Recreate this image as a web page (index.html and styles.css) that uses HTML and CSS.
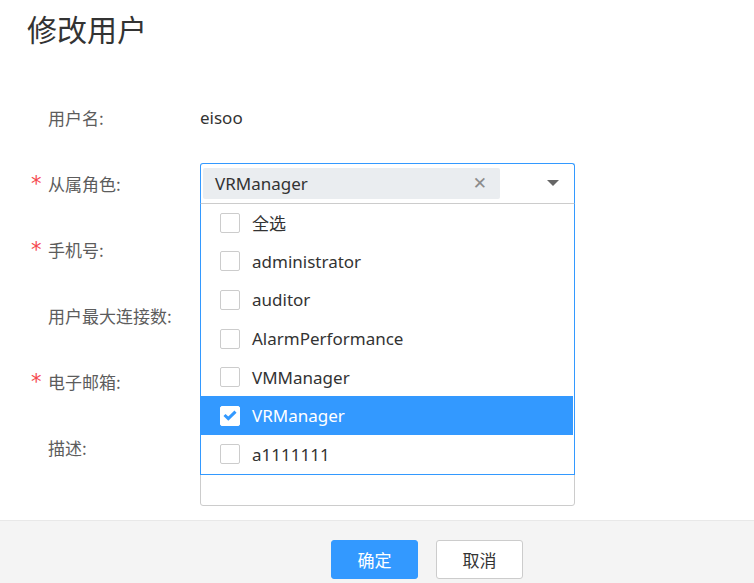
FILE: index.html
```html
<!DOCTYPE html>
<html lang="zh-CN">
<head>
    <meta charset="UTF-8">
    <meta name="viewport" content="width=device-width, initial-scale=1.0">
    <title>修改用户</title>
    <link rel="stylesheet" href="styles.css">
</head>
<body>
    <div class="page">
        <h1 class="title">修改用户</h1>
        <div class="form">
            <div class="row">
                <label class="label">用户名:</label>
                <div class="value">eisoo</div>
            </div>
            <div class="row">
                <label class="label"><span class="star">*</span>从属角色:</label>
                <div class="select-wrap">
                    <div class="select">
                        <span class="tag">VRManager<span class="tag-close">✕</span></span>
                        <span class="caret"></span>
                    </div>
                    <ul class="dropdown">
                        <li><span class="checkbox"></span>全选</li>
                        <li><span class="checkbox"></span>administrator</li>
                        <li><span class="checkbox"></span>auditor</li>
                        <li><span class="checkbox"></span>AlarmPerformance</li>
                        <li><span class="checkbox"></span>VMManager</li>
                        <li class="active"><span class="checkbox checked">
                            <svg width="14" height="11" viewBox="0 0 14 11"><path d="M1.5 5 L5.3 8.6 L12.5 1.6" fill="none" stroke="#3399ff" stroke-width="3"/></svg>
                        </span>VRManager</li>
                        <li><span class="checkbox"></span>a1111111</li>
                    </ul>
                </div>
            </div>
            <div class="row">
                <label class="label"><span class="star">*</span>手机号:</label>
                <input class="input" type="text">
            </div>
            <div class="row">
                <label class="label">用户最大连接数:</label>
                <input class="input" type="text">
            </div>
            <div class="row">
                <label class="label"><span class="star">*</span>电子邮箱:</label>
                <input class="input" type="text">
            </div>
            <div class="row row-top">
                <label class="label">描述:</label>
                <textarea class="textarea"></textarea>
            </div>
        </div>
        <div class="footer">
            <button type="button" class="btn btn-primary">确定</button>
            <button type="button" class="btn">取消</button>
        </div>
    </div>
</body>
</html>
```

FILE: styles.css
```css
body {
    font-family: "Noto Sans", "Noto Sans CJK SC", sans-serif;
    margin: 0;
    padding: 0;
    background-color: white;
    color: #333;
}

.page {
    height: 583px;
    display: flex;
    flex-direction: column;
    overflow: hidden;
}

.title {
    margin: 0;
    padding-left: 27px;
    font-family: "Noto Sans CJK SC", sans-serif;
    font-size: 30px;
    font-weight: normal;
    line-height: 56px;
    color: #333;
}

.form {
    margin-top: 28px;
}

.row {
    display: flex;
    align-items: center;
    height: 66px;
}

.row-top {
    align-items: flex-start;
}

.label {
    position: relative;
    width: 152px;
    padding-left: 48px;
    font-family: "Noto Sans CJK SC", sans-serif;
    font-size: 17px;
    color: #5c5c5c;
}

.row-top .label {
    margin-top: 21px;
}

.star {
    position: absolute;
    left: 31px;
    top: 3px;
    color: #f5484d;
    font-family: "DejaVu Sans", sans-serif;
    font-size: 21px;
    line-height: 21px;
}

.value {
    font-size: 17px;
    color: #333;
}

.input {
    box-sizing: border-box;
    width: 375px;
    height: 38px;
    border: 1px solid #ccc;
    border-radius: 3px;
}

.textarea {
    box-sizing: border-box;
    width: 375px;
    height: 76px;
    margin-top: 16px;
    border: 1px solid #ccc;
    border-radius: 3px;
    resize: none;
}

.select-wrap {
    position: relative;
    width: 375px;
    z-index: 2;
}

.select {
    box-sizing: border-box;
    height: 41px;
    display: flex;
    align-items: center;
    padding: 2px;
    border: 1px solid #3399ff;
    border-bottom: 1px solid #ccc;
    border-radius: 3px 3px 0 0;
}

.tag {
    box-sizing: border-box;
    width: 297px;
    height: 31px;
    display: flex;
    align-items: center;
    justify-content: space-between;
    padding: 0 13px 0 12px;
    background-color: #eaedf0;
    border-radius: 2px;
    font-size: 17px;
    color: #333;
}

.tag-close {
    font-family: "DejaVu Sans", sans-serif;
    font-size: 17px;
    color: #8c8c8c;
    font-weight: bold;
}

.caret {
    margin-left: 47px;
    width: 0;
    height: 0;
    border-left: 6px solid transparent;
    border-right: 6px solid transparent;
    border-top: 6px solid #666;
}

.dropdown {
    position: absolute;
    left: 0;
    top: 41px;
    box-sizing: border-box;
    width: 375px;
    margin: 0;
    padding: 0;
    list-style: none;
    background-color: white;
    border: 1px solid #3399ff;
    border-top: none;
}

.dropdown li {
    height: 38.6px;
    display: flex;
    align-items: center;
    padding-left: 19px;
    font-size: 17px;
    color: #333;
}

.dropdown li.active {
    background-color: #3399ff;
    color: white;
    margin-right: 1px;
}

.checkbox {
    box-sizing: border-box;
    width: 20px;
    height: 20px;
    margin-right: 12px;
    border: 1px solid #ccc;
    border-radius: 2px;
    background-color: white;
    display: flex;
    align-items: center;
    justify-content: center;
}

.checkbox.checked {
    border-color: white;
}

.footer {
    margin-top: auto;
    height: 63px;
    box-sizing: border-box;
    padding: 19px 0 0 331px;
    display: flex;
    gap: 18px;
    background-color: #f4f4f4;
    border-top: 1px solid #e8e8e8;
}

.btn {
    width: 87px;
    height: 39px;
    font-family: "Noto Sans CJK SC", sans-serif;
    font-size: 17px;
    color: #333;
    background-color: white;
    border: 1px solid #ccc;
    border-radius: 3px;
}

.btn-primary {
    background-color: #3399ff;
    border-color: #3399ff;
    color: white;
}
```
